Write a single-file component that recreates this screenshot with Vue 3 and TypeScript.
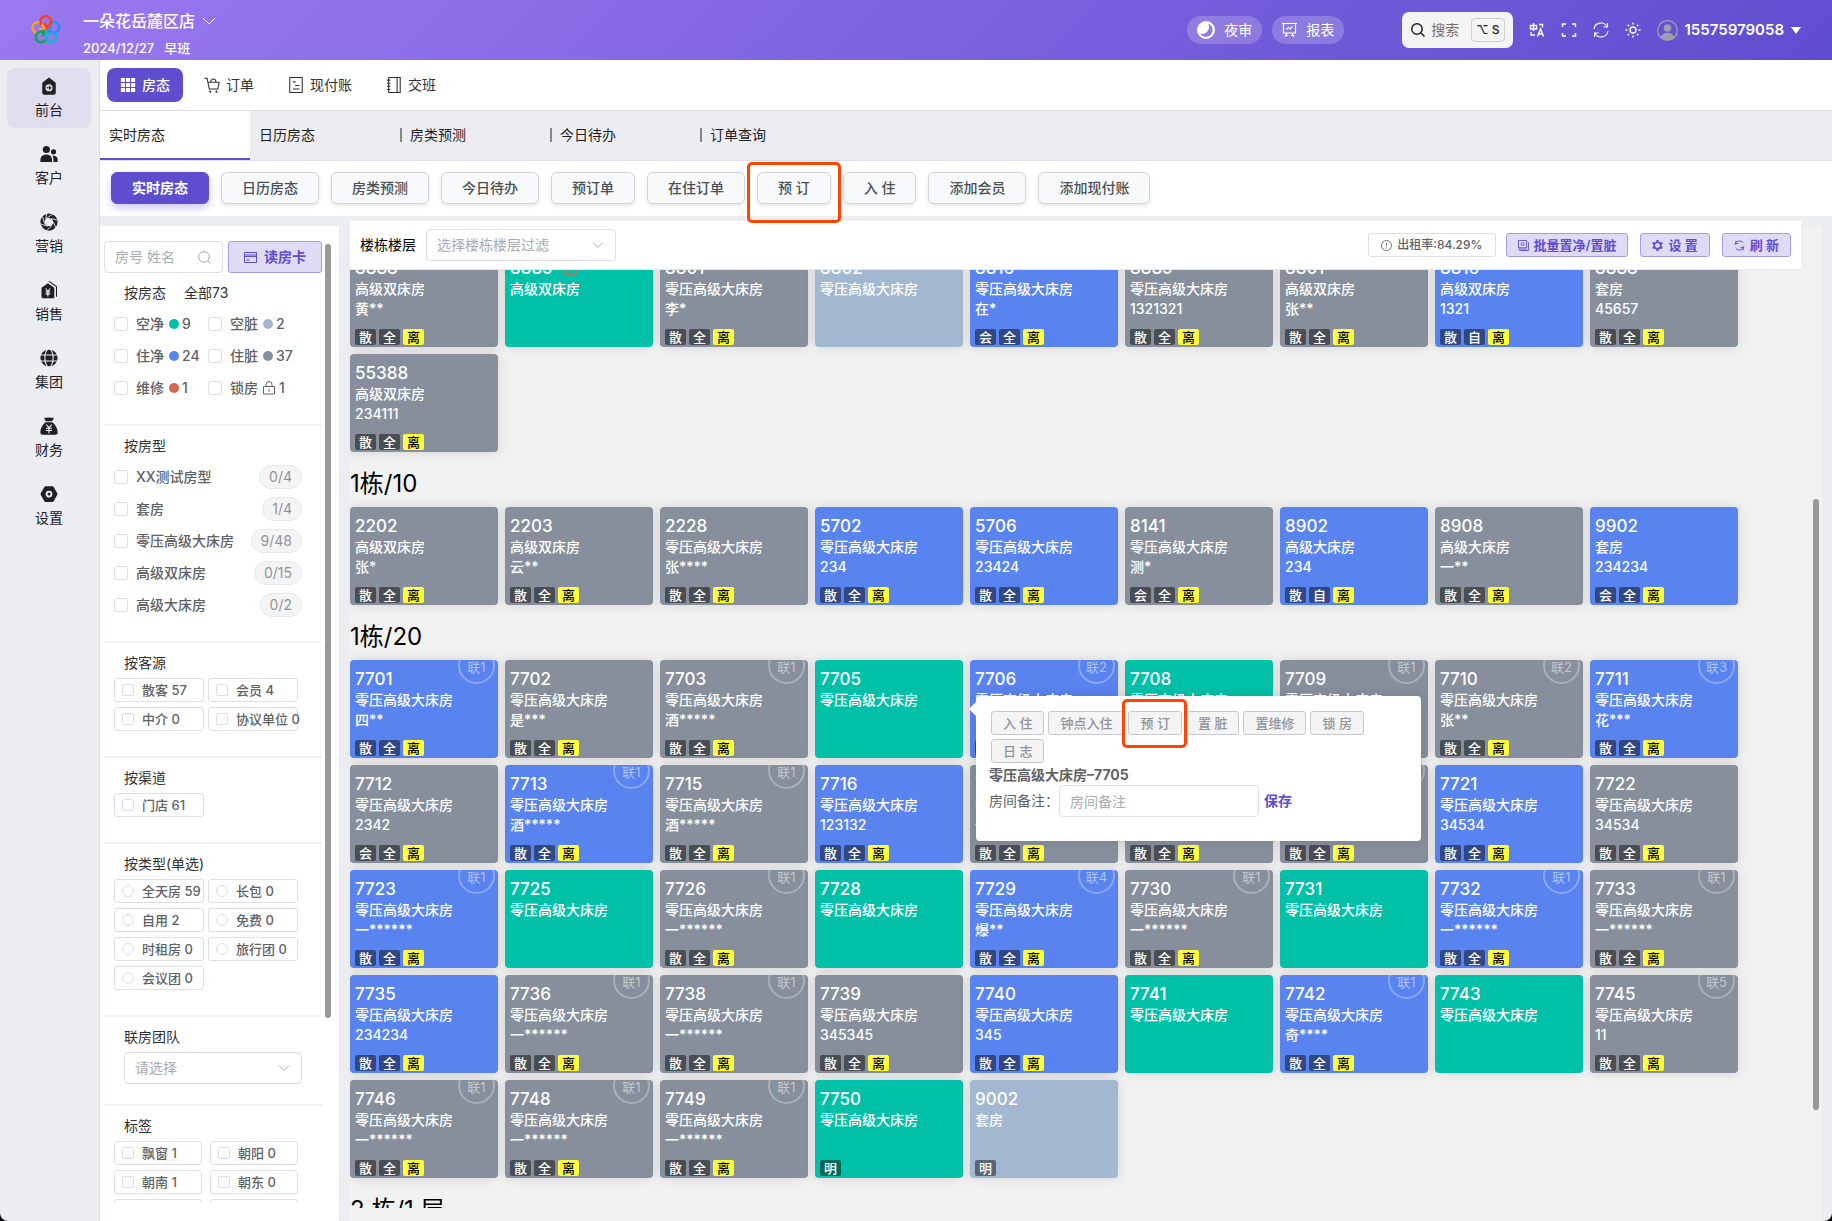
<script setup lang="ts">
import { onMounted, ref } from 'vue'

type Status = 'dirty' | 'stay' | 'clean' | 'empty'

interface Room {
  no: string
  type: string
  status: Status
  guest?: string
  tags?: string
  link?: number
  repair?: boolean
}

interface Floor {
  name: string
  rooms: Room[]
}

const KING = '零压高级大床房'
const TWIN = '高级双床房'
const FULL = '散全离'

function room(no: string, status: Status, guest = '', link = 0, type = KING, tags = guest ? FULL : ''): Room {
  return { no, status, guest, link, type, tags }
}

const floors: Floor[] = [
  {
    name: '',
    rooms: [
      room('8888', 'dirty', '黄**', 0, TWIN),
      { ...room('8889', 'clean', '', 0, TWIN), repair: true },
      room('8801', 'dirty', '李*'),
      room('8802', 'empty'),
      room('8816', 'stay', '在*', 0, KING, '会全离'),
      room('8889', 'dirty', '1321321'),
      room('8801', 'dirty', '张**', 0, TWIN),
      room('8816', 'stay', '1321', 0, TWIN, '散自离'),
      room('8888', 'dirty', '45657', 0, '套房'),
      room('55388', 'dirty', '234111', 0, TWIN),
    ],
  },
  {
    name: '1栋/10',
    rooms: [
      room('2202', 'dirty', '张*', 0, TWIN),
      room('2203', 'dirty', '云**', 0, TWIN),
      room('2228', 'dirty', '张****'),
      room('5702', 'stay', '234'),
      room('5706', 'stay', '23424'),
      room('8141', 'dirty', '测*', 0, KING, '会全离'),
      room('8902', 'stay', '234', 0, '高级大床房', '散自离'),
      room('8908', 'dirty', '一**', 0, '高级大床房'),
      room('9902', 'stay', '234234', 0, '套房', '会全离'),
    ],
  },
  {
    name: '1栋/20',
    rooms: [
      room('7701', 'stay', '四**', 1),
      room('7702', 'dirty', '是***'),
      room('7703', 'dirty', '酒*****', 1),
      room('7705', 'clean'),
      room('7706', 'stay', '酒***', 2),
      room('7708', 'clean'),
      room('7709', 'dirty', '张**', 1),
      room('7710', 'dirty', '张**', 2),
      room('7711', 'stay', '花***', 3),
      room('7712', 'dirty', '2342', 0, KING, '会全离'),
      room('7713', 'stay', '酒*****', 1),
      room('7715', 'dirty', '酒*****', 1),
      room('7716', 'stay', '123132'),
      room('7717', 'dirty', '一**'),
      room('7718', 'dirty', '一**'),
      room('7719', 'dirty', '一**', 1),
      room('7721', 'stay', '34534'),
      room('7722', 'dirty', '34534'),
      room('7723', 'stay', '一******', 1),
      room('7725', 'clean'),
      room('7726', 'dirty', '一******', 1),
      room('7728', 'clean'),
      room('7729', 'stay', '爆**', 4),
      room('7730', 'dirty', '一******', 1),
      room('7731', 'clean'),
      room('7732', 'stay', '一******', 1),
      room('7733', 'dirty', '一******', 1),
      room('7735', 'stay', '234234'),
      room('7736', 'dirty', '一******', 1),
      room('7738', 'dirty', '一******', 1),
      room('7739', 'dirty', '345345'),
      room('7740', 'stay', '345'),
      room('7741', 'clean'),
      room('7742', 'stay', '奇****', 1),
      room('7743', 'clean'),
      room('7745', 'dirty', '11', 5),
      room('7746', 'dirty', '一******', 1),
      room('7748', 'dirty', '一******', 1),
      room('7749', 'dirty', '一******', 1),
      room('7750', 'clean', '', 0, KING, '明'),
      room('9002', 'empty', '', 0, '套房', '明'),
    ],
  },
  { name: '2 栋/1 层', rooms: [] },
]

const activeRoom = '7705'
const popActions = ['入 住', '钟点入住', '预 订', '置 脏', '置维修', '锁 房', '日 志']

const rail = [
  {
    label: '前台',
    icon: '<path fill-rule="evenodd" d="M12 0.500 21 7.500V21a2.500 2.500 0 0 1-2.500 2.500h-13A2.500 2.500 0 0 1 3 21V7.500ZM12 9.500a4.800 4.800 0 1 0 0 9.600 4.800 4.800 0 0 0 0-9.600Z"/><path d="M8.500 13.500h3.500v-2.200l3.600 3-3.600 3v-2.200H8.500Z"/>',
  },
  {
    label: '客户',
    icon: '<circle cx="8.500" cy="6" r="4.800"/><path d="M0.500 22.500v-3a7 7 0 0 1 7-7h2a7 7 0 0 1 6.500 7v3Z"/><circle cx="18" cy="9" r="3.500"/><path d="M16.500 14.200h2a5.500 5.500 0 0 1 5 5.800v2.500h-5.500v-3a9 9 0 0 0-1.500-5.300Z"/>',
  },
  {
    label: '营销',
    icon: '<path fill-rule="evenodd" d="M12 0.500a11.500 11.500 0 1 0 0 23 11.500 11.500 0 0 0 0-23ZM12 6.500l4.500 2 1.500 4.500-2.500 4-4.500 0.800-4.300-2.600-0.700-4.700 2.500-3.500Z"/><g stroke="#ecedf1" stroke-width="1.200"><path d="M9 7 17 1.200M15 7.300l8 2.200M17.800 12l3.200 7.500M15.500 17 9 23.500M10 17.800 1 14.500M6 14 3.500 5M7.500 8.500 9 0.500"/></g>',
  },
  {
    label: '销售',
    icon: '<path fill-rule="evenodd" d="M10.500 3 19 9v14H4a2 2 0 0 1-2-2V9Z"/><path d="M12 0.500 22 7.500V21" fill="none" stroke="#1f2023" stroke-width="1.400"/><path d="m7.500 10 3 4 3-4M7.500 14.500h6M7.500 17.200h6M10.500 14v6.500" fill="none" stroke="#ecedf1" stroke-width="1.500"/>',
  },
  {
    label: '集团',
    icon: '<circle cx="12" cy="12" r="11.500"/><g fill="none" stroke="#ecedf1" stroke-width="1.500"><ellipse cx="12" cy="12" rx="5.500" ry="12"/><path d="M0 8h24M0 16h24"/></g>',
  },
  {
    label: '财务',
    icon: '<path d="M6 0.500c2 1.500 3.500-0.500 6 0.500 2.500-1 4 1 6-0.500 1 2-1.500 3.500-2 5H8C7.500 4 5 2.500 6 0.500ZM7.500 7h9c4 3 7 8.500 7 13.500 0 2-1 3-3 3h-17c-2 0-3-1-3-3C0.500 15.500 3.500 10 7.500 7Z"/><path d="m8.500 10 3.500 4.500 3.500-4.500M8 15h8M8 18h8M12 14.500v7" fill="none" stroke="#ecedf1" stroke-width="1.600"/>',
  },
  {
    label: '设置',
    icon: '<path fill-rule="evenodd" d="M7.500 1.500h9a2 2 0 0 1 1.700 1l4.800 8.500a2 2 0 0 1 0 2l-4.800 8.500a2 2 0 0 1-1.700 1h-9a2 2 0 0 1-1.700-1L1 13a2 2 0 0 1 0-2l4.800-8.500a2 2 0 0 1 1.700-1ZM12 7.500a4.500 4.500 0 1 0 0 9 4.500 4.500 0 0 0 0-9Z"/><circle cx="12" cy="12" r="2"/>',
  },
]

const modules = [
  { label: '房态', icon: '<path fill="currentColor" stroke="none" d="M0 0h4.600v4.600H0ZM5.700 0h4.600v4.600H5.700ZM11.400 0H16v4.600h-4.600ZM0 5.700h4.600v4.600H0ZM5.700 5.700h4.600v4.600H5.700ZM11.400 5.700H16v4.600h-4.600ZM0 11.400h4.600V16H0ZM5.700 11.400h4.600V16H5.700ZM11.400 11.400H16V16h-4.600Z"/>' },
  { label: '订单', icon: '<path d="M-0.500 0.500h3l2.500 12h9.500l1.500-7.500H3.500M6.500 5c0-5 6-5 6 0"/><circle cx="6" cy="15.500" r="0.600"/><circle cx="13" cy="15.500" r="0.600"/>' },
  { label: '现付账', icon: '<path d="M1-0.500h14v17H1ZM4.500 4.500h3M7 8.500h5M4.500 12.500h7.500"/>' },
  { label: '交班', icon: '<path d="M2-0.500h13v17H2ZM11.500-0.500v17M0 2.500h4M0 6h4M0 9.500h4M0 13h4"/>' },
]

const tabs = ['实时房态', '日历房态', '房类预测', '今日待办', '订单查询']
const actions = ['实时房态', '日历房态', '房类预测', '今日待办', '预订单', '在住订单', '预 订', '入 住', '添加会员', '添加现付账']

const states = [
  { label: '空净', color: '#00c1a8', count: 9 },
  { label: '空脏', color: '#a2b8d0', count: 2 },
  { label: '住净', color: '#5983ef', count: 24 },
  { label: '住脏', color: '#868f9b', count: 37 },
  { label: '维修', color: '#d6644a', count: 1 },
  { label: '锁房', color: '', count: 1 },
]

const roomTypes = [
  ['XX测试房型', '0/4'],
  ['套房', '1/4'],
  ['零压高级大床房', '9/48'],
  ['高级双床房', '0/15'],
  ['高级大床房', '0/2'],
]

const chipGroups = [
  { title: '按客源', kind: 'checkbox', items: ['散客 57', '会员 4', '中介 0', '协议单位 0'] },
  { title: '按渠道', kind: 'checkbox', items: ['门店 61'] },
  { title: '按类型(单选)', kind: 'radio', items: ['全天房 59', '长包 0', '自用 2', '免费 0', '时租房 0', '旅行团 0', '会议团 0'] },
]
const labels = ['飘窗 1', '朝阳 0', '朝南 1', '朝东 0', '朝西 0', '朝北 0']
const petals = ['#f9a12e', '#12a562', '#16b4cf', '#2f8ef5', '#ff3b20']
const petalAngles = [-72, -144, 144, 72, 0]

const board = ref<HTMLElement | null>(null)
onMounted(() => {
  if (board.value) board.value.scrollTop = 21
})
</script>

<template>
  <div class="app">
    <header class="topbar">
      <svg class="logo" viewBox="-16 -16 32 32" aria-hidden="true">
        <path
          v-for="(c, i) in petals"
          :key="c"
          :stroke="c"
          :transform="`rotate(${petalAngles[i]})`"
          d="M-4.500 -5.500 A5.300 5.300 0 1 1 4.500 -6 L1 -2 L-1.500 -7"
          fill="none"
          stroke-width="2.600"
          stroke-linejoin="round"
        />
      </svg>
      <div class="store">
        <button class="store-name" type="button">
          一朵花岳麓区店
          <svg width="12" height="12" viewBox="0 0 12 12"><path d="M0 3l6 6 6-6" fill="none" stroke="currentColor" /></svg>
        </button>
        <div class="shift"><span>2024/12/27</span><span>早班</span></div>
      </div>
      <button class="pill" type="button">
        <svg width="18" height="18" viewBox="0 0 18 18"><path fill="currentColor" fill-rule="evenodd" d="M9 0a9 9 0 1 0 0 18A9 9 0 0 0 9 0ZM11 2.500A6.800 6.800 0 1 1 3 12.500A6.800 6.800 0 0 0 11 2.500Z" /></svg>
        夜审
      </button>
      <button class="pill" type="button">
        <svg width="15" height="16" viewBox="0 0 15 16" fill="none" stroke="currentColor" stroke-width="1.200"><path d="M0 1.500h15M1.500 1.500v9.500h12V1.500M4.500 7.500 6.500 5.500l1.500 1.500 2.500-2.500M5 11l-2 4M10 11l2 4M4 13.500h2M9 13.500h2" /></svg>
        报表
      </button>
      <button class="search" type="button">
        <svg width="14" height="14" viewBox="0 0 14 14" fill="none" stroke="#222" stroke-width="1.500"><circle cx="6" cy="6" r="5.200" /><path d="m10 10 3.500 3.500" /></svg>
        <span>搜索</span>
        <kbd>⌥ S</kbd>
      </button>
      <nav class="tools" aria-label="工具">
        <svg viewBox="0 0 16 16"><path d="M1.500 3.500h6v3.500h-6ZM4.500 1v8M2 10v3h4M10 2.500h3.500v3M8.500 14.500 11.500 7l3 7.500M9.500 12h4" /></svg>
        <svg viewBox="0 0 16 16"><path d="M1.500 5V2h3.500M11 2h3.500v3M14.500 11v3H11M5 14H1.500v-3" /></svg>
        <svg viewBox="0 0 16 16"><path d="M1 7a7 7 0 0 1 13-2.500M14.500 1v4h-4M15 9a7 7 0 0 1-13 2.500M1.500 15v-4h4" stroke-width="1.100" /></svg>
        <svg viewBox="0 0 16 16"><circle cx="8" cy="8" r="3" /><path d="M8 .5v2M8 13.500v2M.5 8h2M13.500 8h2M2.700 2.700 4 4M12 12l1.300 1.300M13.300 2.700 12 4M4 12l-1.300 1.300" /></svg>
      </nav>
      <button class="user" type="button">
        <svg width="21" height="21" viewBox="0 0 21 21"><circle cx="10.500" cy="10.500" r="9.800" fill="none" stroke="#9aa0ae" stroke-width="1.300" /><circle cx="10.500" cy="8" r="3.800" fill="#9aa0ae" /><path d="M4 18c0-7 13-7 13 0a9.800 9.800 0 0 1-13 0Z" fill="#9aa0ae" /></svg>
        15575979058
        <svg width="10" height="7" viewBox="0 0 10 7"><path d="M0 0h10L5 7Z" fill="currentColor" /></svg>
      </button>
    </header>

    <div class="body">
      <nav class="rail" aria-label="主导航">
        <a v-for="(item, i) in rail" :key="item.label" href="#" :class="{ active: i === 0 }">
          <svg width="18" height="18" viewBox="0 0 24 24" fill="#1f2023"><g v-html="item.icon" /></svg>
          {{ item.label }}
        </a>
      </nav>

      <div class="main">
        <nav class="modules" aria-label="模块">
          <a v-for="(m, i) in modules" :key="m.label" href="#" :class="{ active: i === 0 }">
            <svg width="16" height="18" viewBox="-1 -1 18 18" fill="none" stroke="currentColor" stroke-width="1.200"><g v-html="m.icon" /></svg>
            {{ m.label }}
          </a>
        </nav>
        <nav class="tabs" aria-label="标签页">
          <a v-for="(t, i) in tabs" :key="t" href="#" :class="{ active: i === 0, split: i > 1 }">{{ t }}</a>
        </nav>
        <div class="actions">
          <button v-for="(a, i) in actions" :key="a" type="button" :class="{ active: i === 0 }">
            {{ a }}<span v-if="a === '预 订'" class="mark mark-top" />
          </button>
        </div>

        <div class="workspace">
          <aside class="side">
            <div class="filters">
              <div class="lookup">
                <div class="field">
                  <input type="text" placeholder="房号 姓名" aria-label="房号 姓名" />
                  <svg width="13" height="13" viewBox="0 0 13 13" fill="none" stroke="#a8abb2"><circle cx="6" cy="6" r="5.300" /><path d="m10 10 2.500 2.500" /></svg>
                </div>
                <button class="soft read" type="button">
                  <svg width="13" height="11" viewBox="0 0 13 11" fill="none" stroke="currentColor"><path d="M.5.5h12v10H.5ZM.5 3h12M.5 4.500h12M2.500 8h3" /></svg>
                  读房卡
                </button>
              </div>

              <section>
                <h3><span>按房态</span><span>全部73</span></h3>
                <div class="states">
                  <label v-for="s in states" :key="s.label">
                    <input type="checkbox" /><span class="name">{{ s.label }}</span>
                    <i v-if="s.color" class="dot" :style="{ background: s.color }" />
                    <svg v-else width="12" height="14" viewBox="0 0 12 14" fill="none" stroke="#606266"><path d="M.5 5.500h11v7.500H.5ZM3 5.500V3.500a3 3 0 0 1 6 0v2M6 8v2.500" /></svg>
                    <span>{{ s.count }}</span>
                  </label>
                </div>
              </section>

              <section>
                <h3>按房型</h3>
                <label v-for="[name, count] in roomTypes" :key="name" class="type-row">
                  <input type="checkbox" /><span class="name">{{ name }}</span><em>{{ count }}</em>
                </label>
              </section>

              <section v-for="g in chipGroups" :key="g.title">
                <h3>{{ g.title }}</h3>
                <div class="chips">
                  <label v-for="c in g.items" :key="c"><input :type="g.kind" :name="g.title" />{{ c }}</label>
                </div>
              </section>

              <section>
                <h3><label for="team">联房团队</label></h3>
                <div class="select team">
                  <select id="team"><option>请选择</option></select>
                  <svg width="12" height="12" viewBox="0 0 12 12"><path d="M1 3.500 6 8.500l5-5" fill="none" stroke="#a8abb2" /></svg>
                </div>
              </section>

              <section>
                <h3>标签</h3>
                <div class="chips wide">
                  <label v-for="c in labels" :key="c"><input type="checkbox" />{{ c }}</label>
                </div>
              </section>
            </div>
            <div class="track side-track"><i class="before" /><i class="thumb" /><i class="after" /></div>
          </aside>

          <div class="pane">
            <div class="toolbar">
              <label for="floor">楼栋楼层</label>
              <div class="select floor">
                <select id="floor"><option>选择楼栋楼层过滤</option></select>
                <svg width="12" height="12" viewBox="0 0 12 12"><path d="M1 3.500 6 8.500l5-5" fill="none" stroke="#a8abb2" /></svg>
              </div>
              <button class="rate" type="button">
                <svg width="11" height="11" viewBox="0 0 12 12" fill="none" stroke="currentColor"><circle cx="6" cy="6" r="5.400" /><path d="M6 3v3.700M6 8v1.200" /></svg>
                出租率:84.29%
              </button>
              <button class="soft" type="button">
                <svg width="11" height="11" viewBox="0 0 12 12" fill="none" stroke="currentColor"><path d="M.5.5h9v8h-9ZM11.500 2.500v9h-10M.5 10h9" /><circle cx="5" cy="4.500" r="1.600" /></svg>
                批量置净/置脏
              </button>
              <button class="soft" type="button">
                <svg width="11" height="11" viewBox="0 0 12 12" fill="none" stroke="currentColor"><circle cx="6" cy="6" r="3.600" stroke-width="1.800" /><path d="M6 0v2M6 10v2M.8 3l1.800 1M9.400 8l1.800 1M11.200 3 9.400 4M2.600 8 .8 9" stroke-width="2.400" /></svg>
                设 置
              </button>
              <button class="soft" type="button">
                <svg width="11" height="11" viewBox="0 0 12 12" fill="none" stroke="currentColor"><path d="M1 5.500A5 5 0 0 1 10 3M2 1v3h3M11 6.500A5 5 0 0 1 2 9M10 11V8H7" /></svg>
                刷 新
              </button>
            </div>

            <div ref="board" class="board">
              <template v-for="f in floors" :key="f.name">
                <h2 v-if="f.name">{{ f.name }}</h2>
                <ul v-if="f.rooms.length" class="rooms">
                  <li v-for="(r, i) in f.rooms" :key="i">
                    <article class="card" :class="r.status">
                      <span v-if="r.link" class="link">联{{ r.link }}</span>
                      <strong>
                        {{ r.no }}
                        <svg v-if="r.repair" width="14" height="14" viewBox="0 0 14 14" fill="none" stroke="#d6644a" stroke-width="1.500"><rect x="1" y="1" width="12" height="12" rx="2" /><path d="M7 4v6" /></svg>
                      </strong>
                      <span>{{ r.type }}</span>
                      <span>{{ r.guest }}</span>
                      <div class="tags">
                        <b v-for="t in r.tags" :key="t" :class="{ leave: t === '离' }">{{ t }}</b>
                      </div>
                    </article>
                    <div v-if="r.no === activeRoom" class="popover" role="dialog">
                      <div class="pop-actions">
                        <button v-for="a in popActions" :key="a" type="button">
                          {{ a }}<span v-if="a === '预 订'" class="mark mark-pop" />
                        </button>
                      </div>
                      <h4>{{ r.type }}–{{ r.no }}</h4>
                      <div class="note">
                        <label for="note">房间备注：</label>
                        <input id="note" type="text" placeholder="房间备注" />
                        <a href="#">保存</a>
                      </div>
                    </div>
                  </li>
                </ul>
              </template>
            </div>
          </div>
          <div class="track pane-track"><i class="before" /><i class="thumb" /><i class="after" /></div>
        </div>
      </div>
    </div>
  </div>
</template>

<style>
html,
body {
  margin: 0;
  background: #000;
}
</style>

<style scoped>
* {
  box-sizing: border-box;
}
.app {
  display: flex;
  flex-direction: column;
  height: 100vh;
  overflow: hidden;
  border-radius: 0 0 8px 8px;
  background: #ecedf1;
  color: #303133;
  font: 14px/20px Inter, 'Noto Sans CJK SC', sans-serif;
}
button,
input,
select,
kbd {
  font: inherit;
  color: inherit;
}
button {
  display: flex;
  align-items: center;
  border: 0;
  padding: 0;
  background: none;
  white-space: nowrap;
}
a {
  color: inherit;
  text-decoration: none;
}
svg {
  flex: none;
}
h2,
h3,
h4,
ul {
  margin: 0;
  padding: 0;
  list-style: none;
}

/* top bar */
.topbar {
  display: flex;
  align-items: center;
  flex: none;
  height: 60px;
  padding: 0 31px 0 30px;
  background: linear-gradient(135deg, #9b79f0, #5f4dcf);
  color: #fff;
}
.logo {
  width: 32px;
  height: 32px;
  margin-right: 21px;
}
.store {
  margin-right: auto;
  padding-top: 7px;
}
.store-name {
  gap: 8px;
  font-size: 16px;
  line-height: 24px;
  font-weight: 500;
}
.shift {
  display: flex;
  gap: 10px;
  padding-top: 5px;
  font-size: 13px;
  font-weight: 500;
}
.pill {
  gap: 9px;
  height: 28px;
  margin-right: 10px;
  padding: 0 10px;
  border-radius: 14px;
  background: rgba(255, 255, 255, 0.2);
}
.search {
  height: 36px;
  margin-left: 48px;
  padding: 0 8px 0 9px;
  gap: 6px;
  border-radius: 7px;
  background: #f4f4f5;
  color: #77706a;
}
.search kbd {
  height: 24px;
  margin-left: 6px;
  padding: 0 4px;
  border: 1px solid #cfcfd2;
  border-radius: 4px;
  color: #222;
  font-size: 12px;
  line-height: 22px;
  font-weight: 500;
}
.tools {
  display: flex;
  gap: 16px;
  margin: 0 16px;
}
.tools svg {
  width: 16px;
  height: 16px;
  fill: none;
  stroke: #fff;
  stroke-width: 1.4;
}
.user {
  gap: 7px;
  font-size: 15px;
  font-weight: 600;
}

.body {
  display: flex;
  flex: 1;
  min-height: 0;
}
.rail {
  display: flex;
  flex-direction: column;
  flex: none;
  gap: 8px;
  width: 100px;
  padding: 8px 8px 0 7px;
  border-right: 1px solid #dcdfe9;
}
.rail a {
  display: flex;
  flex-direction: column;
  align-items: center;
  gap: 5px;
  height: 60px;
  padding-top: 9px;
  border-radius: 8px;
  color: #1f2023;
}
.rail .active {
  background: #e0deee;
}

.main {
  display: flex;
  flex: 1;
  flex-direction: column;
  min-width: 0;
}
.modules {
  display: flex;
  align-items: center;
  flex: none;
  gap: 8px;
  height: 51px;
  padding: 0 7px;
  border-bottom: 1px solid #dcdfe9;
  background: #fff;
}
.modules a {
  display: flex;
  align-items: center;
  gap: 6px;
  height: 34px;
  padding: 0 13px;
  border-radius: 8px;
}
.modules .active {
  background: #5f4dcf;
  color: #fff;
  font-weight: 500;
}
.tabs {
  display: flex;
  flex: none;
  height: 50px;
  border-bottom: 1px solid #dcdfe9;
}
.tabs a {
  display: flex;
  align-items: center;
  width: 150px;
  padding-left: 9px;
  border-bottom: 2px solid transparent;
  color: #1f2023;
}
.tabs .active {
  border-color: #5f4dcf;
  background: #fff;
}
.tabs .split::before {
  content: '';
  width: 2px;
  height: 14px;
  margin: 0 8px 0 -9px;
  background: #888;
}
.actions {
  display: flex;
  flex: none;
  gap: 12px;
  height: 55px;
  padding: 11px;
  background: #fff;
}
.actions button {
  position: relative;
  height: 32px;
  padding: 0 20px;
  border: 1px solid #d0d5db;
  border-radius: 6px;
  background: #f8f9fa;
  box-shadow: 0 2px 4px rgba(0, 0, 0, 0.1);
  color: #495057;
  font-weight: 500;
}
.actions .active {
  border-color: #5f4dcf;
  background: #5f4dcf;
  box-shadow: 0 4px 8px rgba(95, 77, 207, 0.3);
  color: #fff;
  font-weight: 700;
}
.mark {
  position: absolute;
  z-index: 20;
  border: 3px solid #ff4500;
  border-radius: 5px;
  pointer-events: none;
}
.mark-top {
  inset: -11px -11px -20px;
}
.mark-pop {
  inset: -13px -6px -14px -7px;
}

.workspace {
  display: flex;
  flex: 1;
  min-height: 0;
  padding-right: 10px;
}

/* filter column */
.side {
  display: flex;
  flex: none;
  width: 239px;
  margin: 10px 11px 0 0;
  padding-left: 4px;
  background: #fff;
}
.filters {
  width: 218px;
  margin: 15px 3px 19px 0;
  overflow: hidden;
}
.lookup {
  display: flex;
  gap: 5px;
}
.field {
  display: flex;
  align-items: center;
  flex: 1;
  height: 32px;
  padding-right: 11px;
  border: 1px solid #dcdfe9;
  border-radius: 4px;
}
input[type='text'] {
  width: 100%;
  min-width: 0;
  padding: 0 10px;
  border: 0;
  background: none;
  outline: 0;
}
input::placeholder {
  color: #a8abb2;
}
.soft {
  gap: 5px;
  height: 24px;
  padding: 0 11px;
  border: 1px solid #a99be5;
  border-radius: 3px;
  background: #dfdbf5;
  color: #5f4dcf;
  font-size: 13px;
  font-weight: 600;
}
.read {
  gap: 7px;
  height: 32px;
  padding: 0 15px;
  font-size: 14px;
}
section {
  padding: 10px 0 20px;
  border-bottom: 2px solid #f1f1f1;
}
h3 {
  display: flex;
  gap: 18px;
  margin-bottom: 5px;
  padding-left: 20px;
  font-size: 14px;
  line-height: 20px;
  font-weight: 400;
}
input[type='checkbox'],
input[type='radio'] {
  flex: none;
  width: 14px;
  height: 14px;
  margin: 0;
  appearance: none;
  border: 1px solid #dcdfe9;
  border-radius: 2px;
  background: #fff;
}
.states {
  display: grid;
  grid-template-columns: 94px 94px;
  padding-left: 10px;
  color: #606266;
  font-weight: 500;
}
.states label,
.type-row {
  display: flex;
  align-items: center;
  height: 32px;
}
.name {
  margin: 0 5px 0 8px;
}
.dot {
  width: 10px;
  height: 10px;
  margin-right: 3px;
  border-radius: 5px;
}
.states svg {
  margin-right: 4px;
}
.type-row {
  padding: 0 20px 0 10px;
  color: #606266;
  font-weight: 500;
}
.type-row em {
  height: 24px;
  margin-left: auto;
  padding: 0 9px;
  border: 1px solid #e9e9eb;
  border-radius: 12px;
  background: #f4f4f5;
  color: #909399;
  font-style: normal;
  font-weight: 400;
  line-height: 22px;
}
.chips {
  display: grid;
  grid-template-columns: 90px 90px;
  gap: 5px 4px;
  padding: 0 0 5px 10px;
}
.chips.wide {
  grid-template-columns: 88px 88px;
  column-gap: 8px;
}
.chips label {
  display: flex;
  align-items: center;
  gap: 8px;
  height: 24px;
  padding-left: 7px;
  border: 1px solid #dcdfe9;
  border-radius: 3px;
  color: #606266;
  font-size: 13px;
  font-weight: 500;
  white-space: nowrap;
}
.chips input[type] {
  width: 12px;
  height: 12px;
}
.chips input[type='radio'] {
  border-radius: 6px;
}
.select {
  position: relative;
  height: 32px;
}
.select select {
  width: 100%;
  height: 100%;
  padding: 0 30px 0 10px;
  appearance: none;
  border: 1px solid #dcdfe9;
  border-radius: 4px;
  background: #fff;
  color: #a8abb2;
}
.select svg {
  position: absolute;
  top: 10px;
  right: 12px;
  pointer-events: none;
}
.team {
  margin: 0 20px;
}
.floor {
  width: 190px;
  margin: 0 auto 0 10px;
}

/* scroll indicators */
.track {
  display: flex;
  flex-direction: column;
}
.track .thumb {
  width: 6px;
  border-radius: 3px;
  background: #999;
}
.side-track .before {
  flex: 18;
}
.side-track .thumb {
  flex: 774;
}
.side-track .after {
  flex: 203;
}
.pane-track {
  align-items: flex-end;
  flex: none;
  width: 21px;
  margin-top: 10px;
  padding-right: 3px;
  background: #f1f1f1;
}
.pane-track .before {
  flex: 273;
}
.pane-track .thumb {
  flex: 611;
}
.pane-track .after {
  flex: 111;
}

/* room board */
.pane {
  display: flex;
  flex: 1;
  flex-direction: column;
  min-width: 0;
  margin-top: 5px;
  padding-bottom: 13px;
  background: #f1f1f1;
}
.toolbar {
  display: flex;
  align-items: center;
  flex: none;
  gap: 12px;
  height: 49px;
  padding: 0 10px;
  border-bottom: 1px solid #e6e7ee;
  background: #fff;
  color: #000;
}
.toolbar > label {
  margin-right: -12px;
}
.rate {
  gap: 5px;
  height: 24px;
  margin-right: -2px;
  padding: 0 12px;
  border: 1px solid #dcdfe6;
  border-radius: 3px;
  color: #606266;
  font-size: 12px;
  font-weight: 500;
}
.board {
  flex: 1;
  min-height: 0;
  overflow: hidden;
}
h2 {
  height: 48px;
  color: #000;
  font-size: 24px;
  line-height: 50px;
  font-weight: 400;
}
.rooms {
  display: flex;
  flex-wrap: wrap;
  gap: 7px;
  padding-bottom: 7px;
}
.rooms li {
  position: relative;
  width: 148px;
}
.card {
  position: relative;
  display: flex;
  flex-direction: column;
  height: 98px;
  padding: 8px 5px 2px;
  border-radius: 4px;
  box-shadow: 0 0 12px rgba(0, 0, 0, 0.12);
  color: #fff;
  font-weight: 500;
  overflow: hidden;
}
.card strong {
  display: flex;
  align-items: center;
  gap: 10px;
  height: 22px;
  font-size: 17px;
  line-height: 22px;
  font-weight: 500;
}
.dirty {
  background: #868f9b;
}
.stay {
  background: #5983ef;
}
.clean {
  background: #00c1a8;
}
.empty {
  background: #a2b8d0;
}
.card .link {
  position: absolute;
  top: -13px;
  right: 3px;
  width: 37px;
  height: 37px;
  border: 2px solid rgba(255, 255, 255, 0.3);
  border-radius: 50%;
  color: rgba(255, 255, 255, 0.5);
  font-size: 13px;
  line-height: 36px;
  font-weight: 400;
  text-align: center;
}
.tags {
  display: flex;
  gap: 3px;
  margin-top: auto;
}
.tags b {
  width: 21px;
  height: 16px;
  border-radius: 2px;
  background: rgba(0, 0, 0, 0.45);
  font-size: 13px;
  line-height: 16px;
  font-weight: 500;
  text-align: center;
}
.tags .leave {
  background: #ffff3c;
  color: #000;
}

.popover {
  position: absolute;
  z-index: 10;
  top: 36px;
  left: 161px;
  width: 445px;
  height: 145px;
  padding: 13px;
  border-radius: 4px;
  background: #fff;
  box-shadow: 0 0 12px rgba(0, 0, 0, 0.12);
  color: #606266;
}
.popover::before {
  content: '';
  position: absolute;
  top: 8px;
  left: -5px;
  width: 10px;
  height: 10px;
  background: #fff;
  transform: rotate(45deg);
}
.pop-actions {
  display: flex;
  flex-wrap: wrap;
  gap: 4px;
  padding: 2px;
}
.pop-actions button {
  position: relative;
  height: 24px;
  padding: 0 11px;
  border: 1px solid #c8c9cc;
  border-radius: 3px;
  background: #f4f4f5;
  color: #909399;
  font-size: 13px;
  font-weight: 500;
}
h4 {
  font-size: 14px;
  line-height: 20px;
  font-weight: 700;
}
.note {
  display: flex;
  align-items: center;
}
.note input[type='text'] {
  width: 200px;
  height: 32px;
  margin-right: 5px;
  border: 1px solid #dcdfe9;
  border-radius: 4px;
}
.note a {
  color: #5f4dcf;
  font-weight: 700;
}
</style>
